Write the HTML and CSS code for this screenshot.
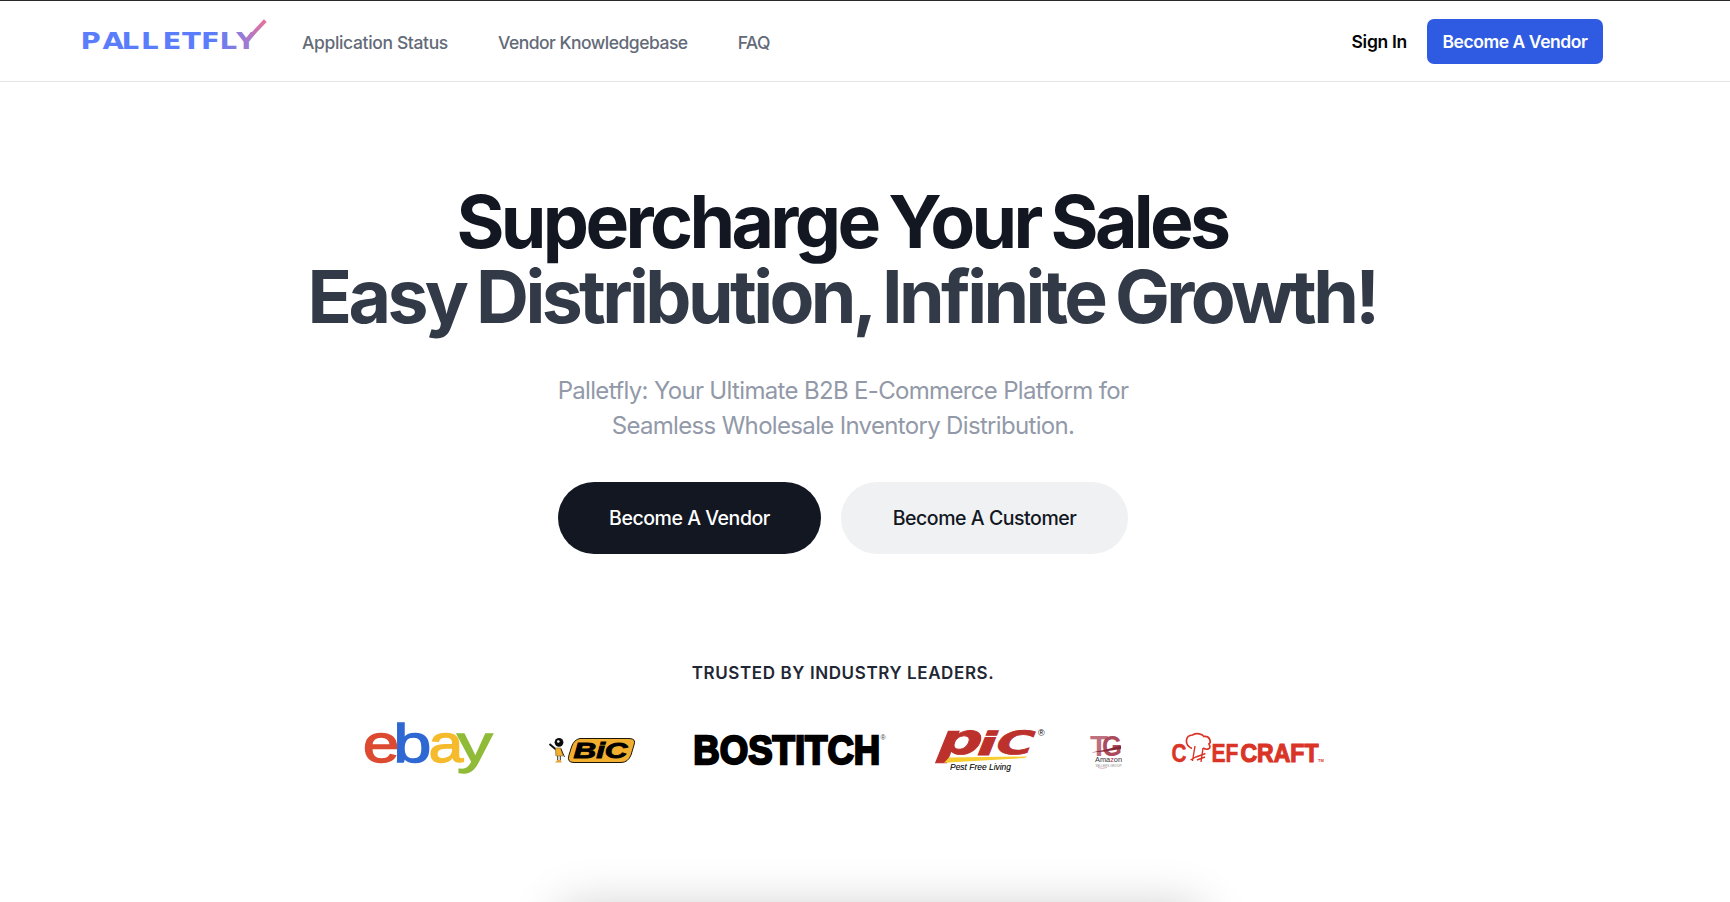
FILE: index.html
```html
<!DOCTYPE html>
<html lang="en">
<head>
<meta charset="utf-8">
<title>Palletfly</title>
<link rel="stylesheet" href="styles.css">
</head>
<body>
<header class="header">
  <a class="brand" aria-label="Palletfly">
    <svg class="brand-logo" viewBox="82 16 186 36" width="186" height="36">
      <defs>
        <linearGradient id="brandFill" gradientUnits="userSpaceOnUse" x1="215" y1="40" x2="266" y2="22">
          <stop offset="0" stop-color="#5b7cfb"/>
          <stop offset="0.45" stop-color="#9c7bd4"/>
          <stop offset="1" stop-color="#e8709c"/>
        </linearGradient>
        <linearGradient id="brandText" gradientUnits="userSpaceOnUse" x1="176" y1="0" x2="210" y2="0">
          <stop offset="0" stop-color="#5b7cfb"/>
          <stop offset="1" stop-color="#a77bcb"/>
        </linearGradient>
      </defs>
      <text class="brand-word" transform="scale(1.2 1)" y="49" x="67.1 85.4 101.2 117.5 135.4 151.7 167.5 182.9 196.8">PALLETFLY</text>
      <path d="M246 41 L265.3 20.6" stroke="url(#brandFill)" stroke-width="3.8" fill="none"/>
    </svg>
  </a>
  <nav class="nav">
    <a class="nav-status">Application Status</a>
    <a class="nav-kb">Vendor Knowledgebase</a>
    <a class="nav-faq">FAQ</a>
  </nav>
  <div class="actions">
    <a class="sign-in">Sign In</a>
    <a class="vendor-btn">Become A Vendor</a>
  </div>
</header>
<main class="hero">
  <h1 class="title"><span class="title-top">Supercharge Your Sales</span><span class="title-sub">Easy Distribution, Infinite Growth!</span></h1>
  <p class="lead">Palletfly: Your Ultimate B2B E-Commerce Platform for<br>Seamless Wholesale Inventory Distribution.</p>
  <div class="cta">
    <a class="pill pill-dark">Become A Vendor</a>
    <a class="pill pill-light">Become A Customer</a>
  </div>
  <h2 class="trusted">TRUSTED BY INDUSTRY LEADERS.</h2>
  <div class="logos">
    <svg class="logo-ebay" viewBox="364 720 130 56" width="130" height="56">
      <g class="ebay-text">
        <text transform="translate(362.8 761.3) scale(1.22 1)" fill="#dc4a31" stroke="#dc4a31">e</text>
        <text transform="translate(393.2 761.3) scale(1.27 1)" fill="#2f68d3" stroke="#2f68d3">b</text>
        <text transform="translate(428.5 761.3) scale(1.16 1)" fill="#f5bb2c" stroke="#f5bb2c">a</text>
        <text transform="translate(457 761.3) scale(1.32 1)" fill="#8fbb38" stroke="#8fbb38">y</text>
      </g>
    </svg>
    <svg class="logo-bic" viewBox="548 720 88 56" width="88" height="56">
      <path d="M549.5 743 L556 748.5" stroke="#111" stroke-width="2"/>
      <path d="M555.5 747h5.5l1.8 7.8h-7z" fill="#f2ae2e" stroke="#7a5a1c" stroke-width=".6"/>
      <path d="M561 748l3.5 8M557.7 755v4.500M560.300 755v4.500" stroke="#3a2c12" stroke-width="1"/>
      <path d="M555 761.500l2.500-2.500h3l1.500 2.500z" fill="#e5a535"/>
      <circle cx="559" cy="741.300" r="4.400" fill="#0b0b0b"/>
      <circle cx="558.300" cy="740.500" r="1.300" fill="#fff"/>
      <path d="M580 737.500H629Q636.500 737.500 634 744L631 754Q628 761.500 621 761.500H574Q566.500 761.500 569 754L571.500 746Q574 738.500 580 737.500Z" fill="#f2ae2e" stroke="#1d1608" stroke-width="1"/>
      <text class="bic-text" x="573.500" y="757" textLength="54" lengthAdjust="spacingAndGlyphs">BiC</text>
    </svg>
    <svg class="logo-bostitch" viewBox="693 720 194 56" width="194" height="56">
      <text class="bostitch-text" x="693.3" y="763" textLength="187" lengthAdjust="spacingAndGlyphs">BOSTITCH</text>
      <text class="reg" x="880.500" y="739" fill="#444">®</text>
    </svg>
    <svg class="logo-pic" viewBox="934 720 112 56" width="112" height="56">
      <g class="pic-text">
        <text transform="translate(934 753.300) skewX(-22) scale(1.46 1)" font-size="42">p</text>
        <text transform="translate(973.500 753.500) skewX(-22) scale(1.8 1)" font-size="32">i</text>
        <text transform="translate(992 753.300) skewX(-22) scale(1.6 1)" font-size="32">C</text>
      </g>
      <path d="M949 756.500L1027 755.500L1025 757L944 761.800Z" fill="#f8cd30"/>
      <text class="pic-tag" x="950" y="769" textLength="61" lengthAdjust="spacingAndGlyphs">Pest Free Living</text>
      <text class="reg reg-big" x="1038" y="734.5">®</text>
    </svg>
    <svg class="logo-tg" viewBox="1090 720 33 56" width="33" height="56">
      <text class="tg-text" x="1090" y="755" fill="#bd7180" textLength="18" lengthAdjust="spacingAndGlyphs">T</text>
      <text class="tg-text" x="1102" y="755" fill="#ab4a5b" textLength="20" lengthAdjust="spacingAndGlyphs">G</text>
      <path d="M1091 751.500Q1106 749 1121 744.500V748Q1104 751 1091 751.500Z" fill="#84283a"/>
      <text class="tg-amazon" x="1095" y="761" textLength="27" lengthAdjust="spacingAndGlyphs">Ama<tspan fill="#c02a42">z</tspan>on</text>
      <text class="tg-small" x="1095.500" y="765.500" textLength="26" lengthAdjust="spacingAndGlyphs">SELLERS GROUP</text>
      <path d="M1098 766.500Q1102 768.300 1107 766.500" fill="none" stroke="#d7a0aa" stroke-width=".8"/>
    </svg>
    <svg class="logo-chef" viewBox="1171 720 154 56" width="154" height="56">
      <g class="chef-text">
        <text x="1171.500" y="760.500" textLength="15" lengthAdjust="spacingAndGlyphs">C</text>
        <text x="1211.500" y="760.500" textLength="27" lengthAdjust="spacingAndGlyphs">EF</text>
        <text class="craft" x="1240.500" y="760.500" textLength="78" lengthAdjust="spacingAndGlyphs">CRAFT</text>
        <text class="tm" x="1318" y="760.500">TM</text>
      </g>
      <path d="M1192 747.500C1184 744 1185 734.500 1192.500 734C1197 731.500 1202 733 1204 735.500C1210 735 1211.500 741 1209 743C1212 748 1207 749.500 1203 747" fill="none" stroke="#da3427" stroke-width="1.700"/>
      <path d="M1195 745L1192.500 760M1203 747L1201 761M1190.500 759L1196 756L1205.500 752.500M1197 759L1205 756" fill="none" stroke="#da3427" stroke-width="1.400"/>
    </svg>
  </div>
  <div class="preview"></div>
</main>
</body>
</html>
```
FILE: styles.css
```css
* { box-sizing: border-box; }
body {
  margin: 0;
  height: 902px;
  overflow: hidden;
  background: #fff;
  font-family: Inter, "Liberation Sans", sans-serif;
}
.header {
  display: flex;
  align-items: flex-start;
  height: 82px;
  padding: 0 127px 0 82px;
  border-top: 1px solid #29292b;
  border-bottom: 1px solid #e3e4e6;
}
.brand { padding-top: 15px; }
.brand-logo { display: block; overflow: visible; }
.brand-word {
  font: bold 23px "DejaVu Sans", sans-serif;
  fill: url(#brandText);
}
.nav {
  display: flex;
  gap: 50px;
  padding: 30px 0 0 34px;
  font-size: 17.5px;
  font-weight: 500;
  line-height: 24px;
  color: #636a78;
  white-space: nowrap;
}
.nav-status { letter-spacing: -.36px; }
.nav-kb { letter-spacing: -.5px; }
.nav-faq { letter-spacing: -.5px; }
.actions {
  display: flex;
  gap: 20px;
  margin-left: auto;
  padding-top: 18px;
  font-size: 17.5px;
  font-weight: 600;
  line-height: 45px;
  white-space: nowrap;
}
.sign-in { letter-spacing: -.3px; color: #050505; }
.vendor-btn {
  width: 176px;
  height: 45px;
  border-radius: 7px;
  background: #2e5be2;
  color: #fff;
  text-align: center;
  letter-spacing: -.45px;
}
.hero {
  display: flex;
  flex-direction: column;
  align-items: center;
  height: 820px;
  padding: 102px 44px 0 0;
  overflow: hidden;
}
.title {
  display: flex;
  flex-direction: column;
  align-items: center;
  margin: 0 2px 0 0;
  font-size: 73.3px;
  font-weight: 700;
  line-height: 75px;
  word-spacing: -3px;
  white-space: nowrap;
}
.title-top { color: #121722; letter-spacing: -3.62px; }
.title-sub { color: #323947; letter-spacing: -3.62px; }
.lead {
  margin: 39px 0 0;
  font-size: 24px;
  line-height: 35px;
  letter-spacing: -.67px;
  color: #9299a8;
  text-align: center;
  white-space: nowrap;
}
.cta { display: flex; gap: 20px; margin-top: 39px; }
.pill {
  height: 72px;
  border-radius: 36px;
  font-size: 19.5px;
  font-weight: 500;
  line-height: 73px;
  text-align: center;
  letter-spacing: -.45px;
  white-space: nowrap;
}
.pill-dark { width: 263px; background: #121722; color: #fff; }
.pill-light { width: 287px; background: #f0f1f3; color: #121722; }
.trusted {
  margin: 107px 0 0;
  font-size: 17px;
  font-weight: 600;
  line-height: 24px;
  letter-spacing: .6px;
  color: #1f2735;
}
.logos {
  display: flex;
  height: 56px;
  margin: 36px 0 0 3px;
}
.logos svg { flex: none; display: block; overflow: visible; }
.logos .logo-bic { margin-left: 54px; }
.logos .logo-bostitch { margin-left: 57px; }
.logos .logo-pic { margin-left: 47px; }
.logos .logo-tg { margin-left: 44px; }
.logos .logo-chef { margin-left: 48px; }
.ebay-text { font: 54px "Liberation Sans", sans-serif; stroke-width: 1.3; }
.bic-text { font: italic bold 22px "Liberation Sans", sans-serif; stroke: #000; stroke-width: .9; }
.bostitch-text { font: bold 41px "Liberation Sans", sans-serif; stroke: #000; stroke-width: 2.4; }
.reg { font: 7px "Liberation Sans", sans-serif; }
.reg-big { font-size: 9px; }
.pic-text { font-family: "DejaVu Sans", sans-serif; font-weight: bold; fill: #bd312d; stroke: #bd312d; stroke-width: .8; }
.pic-tag { font: italic 8.500px "Liberation Sans", sans-serif; stroke: #000; stroke-width: .1; }
.tg-text { font: bold 29px "Liberation Sans", sans-serif; }
.tg-amazon { font: 7.500px "Liberation Sans", sans-serif; fill: #333; }
.tg-small { font: 3.500px "Liberation Sans", sans-serif; fill: #888; }
.chef-text { font: bold 26px "Liberation Sans", sans-serif; fill: #da3427; stroke: #da3427; stroke-width: .5; }
.chef-text .craft { stroke-width: 1.2; }
.chef-text .tm { font-size: 4px; stroke: none; }
.preview {
  width: 645px;
  height: 100px;
  margin: 130px 0 0 74px;
  flex: none;
  border-radius: 16px;
  box-shadow: 0 0 50px rgba(0, 0, 0, .2);
}
```
